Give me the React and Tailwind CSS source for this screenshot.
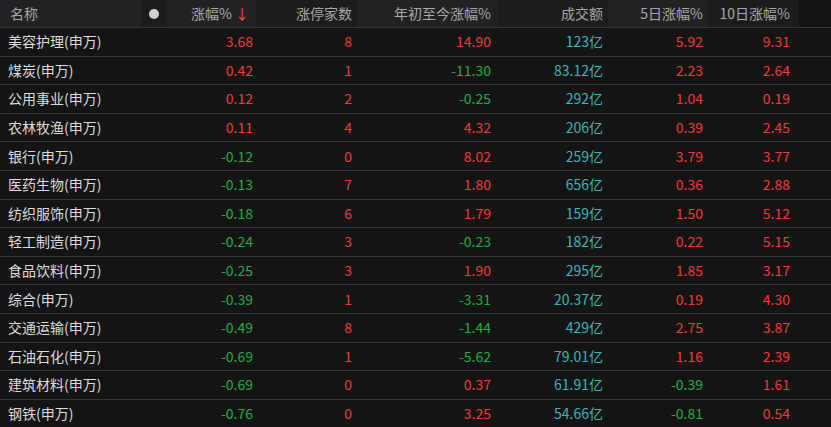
const rows = [
["美容护理(申万)","3.68","8","14.90","123亿","5.92","9.31"],
["煤炭(申万)","0.42","1","-11.30","83.12亿","2.23","2.64"],
["公用事业(申万)","0.12","2","-0.25","292亿","1.04","0.19"],
["农林牧渔(申万)","0.11","4","4.32","206亿","0.39","2.45"],
["银行(申万)","-0.12","0","8.02","259亿","3.79","3.77"],
["医药生物(申万)","-0.13","7","1.80","656亿","0.36","2.88"],
["纺织服饰(申万)","-0.18","6","1.79","159亿","1.50","5.12"],
["轻工制造(申万)","-0.24","3","-0.23","182亿","0.22","5.15"],
["食品饮料(申万)","-0.25","3","1.90","295亿","1.85","3.17"],
["综合(申万)","-0.39","1","-3.31","20.37亿","0.19","4.30"],
["交通运输(申万)","-0.49","8","-1.44","429亿","2.75","3.87"],
["石油石化(申万)","-0.69","1","-5.62","79.01亿","1.16","2.39"],
["建筑材料(申万)","-0.69","0","0.37","61.91亿","-0.39","1.61"],
["钢铁(申万)","-0.76","0","3.25","54.66亿","-0.81","0.54"],
];
const col = (v) => v.startsWith("-") ? "text-[#1fae45]" : "text-[#ee3b3b]";
const grid = "grid grid-cols-[141px_26px_89px_101px_141px_110px_100px_91px_32px]";
export default function App() {
  return (
    <div className="w-[831px] h-[427px] bg-[#131313] text-[14px] overflow-hidden" style={{fontFamily:'"Noto Sans CJK SC","Liberation Sans",sans-serif'}}>
      <div className={`${grid} h-[27px] bg-[#222224] text-[#a8a8a8] items-center`}>
        <div className="pl-2.5">名称</div>
        <div className="h-full bg-[#1c1c1e] flex items-center justify-center"><span className="w-[10px] h-[10px] rounded-full bg-[#d0d0d0]"></span></div>
        <div className="text-right pr-[7px]">涨幅% <span className="text-[#f0522e]">↓</span></div>
        <div className="h-full bg-[#1c1c1e] text-right pr-[5px] flex items-center justify-end">涨停家数</div>
        <div className="text-right pr-[7px]">年初至今涨幅%</div>
        <div className="h-full bg-[#1c1c1e] flex items-center justify-end pr-[5px]">成交额</div>
        <div className="text-right pr-[5px]">5日涨幅%</div>
        <div className="h-full bg-[#1c1c1e] flex items-center justify-end pr-[9px]">10日涨幅%</div>
        <div className="h-full bg-[#131313]"></div>
      </div>
      {rows.map((r,i)=>(
        <div key={i} className={`${grid} h-[28.6px] items-center border-t border-[#353535] first:border-t-0 bg-[#141414]`}>
          <div className="pl-2 text-[#dcdcdc]">{r[0]}</div>
          <div></div>
          <div className={`text-right pr-[3px] ${col(r[1])}`}>{r[1]}</div>
          <div className="text-right pr-[5px] text-[#ee3b3b]">{r[2]}</div>
          <div className={`text-right pr-[7px] ${col(r[3])}`}>{r[3]}</div>
          <div className="text-right pr-[5px] text-[#35b7bd]">{r[4]}</div>
          <div className={`text-right pr-[5px] ${col(r[5])}`}>{r[5]}</div>
          <div className={`text-right pr-[9px] ${col(r[6])}`}>{r[6]}</div>
          <div></div>
        </div>
      ))}
    </div>
  );
}
